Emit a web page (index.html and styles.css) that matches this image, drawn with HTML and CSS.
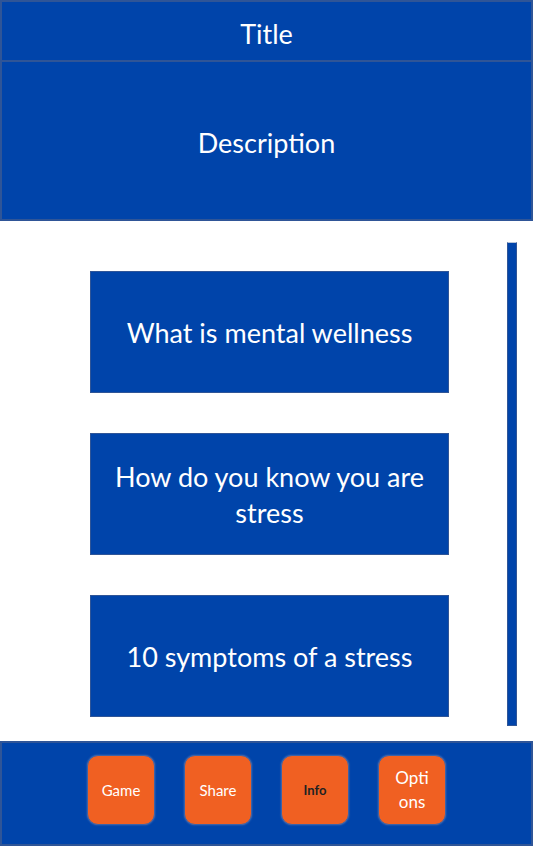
FILE: index.html
```html
<!DOCTYPE html>
<html lang="en">
<head>
<meta charset="utf-8">
<title>Mental wellness</title>
<link rel="stylesheet" href="styles.css">
</head>
<body>
<div class="app">
  <header class="header">
    <div class="title">Title</div>
    <div class="description">Description</div>
  </header>
  <main class="content">
    <div class="cards">
      <div class="card">What is mental wellness</div>
      <div class="card">How do you know you are stress</div>
      <div class="card">10 symptoms of a stress</div>
    </div>
    <div class="scrollbar"></div>
  </main>
  <footer class="footer">
    <div class="btn">Game</div>
    <div class="btn">Share</div>
    <div class="btn btn-info">Info</div>
    <div class="btn btn-options"><span class="wrap">Options</span></div>
  </footer>
</div>
</body>
</html>
```
FILE: styles.css
```css
html, body {
  margin: 0;
  padding: 0;
  background: #ffffff;
}
body {
  font-family: Lato, "Open Sans", sans-serif;
  color: #ffffff;
}
.app {
  width: 533px;
  height: 846px;
  display: flex;
  flex-direction: column;
}
.header {
  display: flex;
  flex-direction: column;
}
.title,
.description {
  background: #0044aa;
  border: 2px solid #2f5597;
  box-sizing: border-box;
  display: flex;
  align-items: center;
  justify-content: center;
  font-size: 27px;
}
.title {
  height: 62px;
  padding-top: 4px;
}
.description {
  height: 161px;
  margin-top: -2px;
  padding-top: 4px;
}
.content {
  flex: 1;
  display: flex;
  padding: 21px 16px 14px 90px;
  box-sizing: border-box;
}
.cards {
  width: 359px;
  display: flex;
  flex-direction: column;
  gap: 40px;
  padding-top: 29px;
}
.card {
  height: 122px;
  box-sizing: border-box;
  background: #0044aa;
  border: 1.5px solid #2f5597;
  display: flex;
  align-items: center;
  justify-content: center;
  text-align: center;
  font-size: 27px;
  line-height: 36px;
  padding: 2px 20px 0;
}
.scrollbar {
  margin-left: auto;
  width: 10px;
  height: 484px;
  box-sizing: border-box;
  background: #0044aa;
  border: 1.5px solid #2f5597;
  border-top-color: #b8c4d8;
}
.footer {
  height: 105px;
  box-sizing: border-box;
  background: #0044aa;
  border: 2px solid #2f5597;
  display: flex;
  justify-content: center;
  align-items: flex-start;
  gap: 29px;
  padding-top: 12px;
}
.btn {
  width: 68px;
  height: 70px;
  box-sizing: border-box;
  background: #f06022;
  border: 1.5px solid #3c62a6;
  border-radius: 11px;
  box-shadow: 0 0 2px rgba(120, 150, 200, 0.6);
  display: flex;
  align-items: center;
  justify-content: center;
  text-align: center;
  font-size: 15px;
  color: #ffffff;
}
.btn-info {
  color: #222222;
  font-weight: bold;
  font-size: 13px;
}
.btn-options {
  font-size: 17px;
  line-height: 24px;
}
.wrap {
  display: block;
  width: 38px;
  word-break: break-all;
}
```
